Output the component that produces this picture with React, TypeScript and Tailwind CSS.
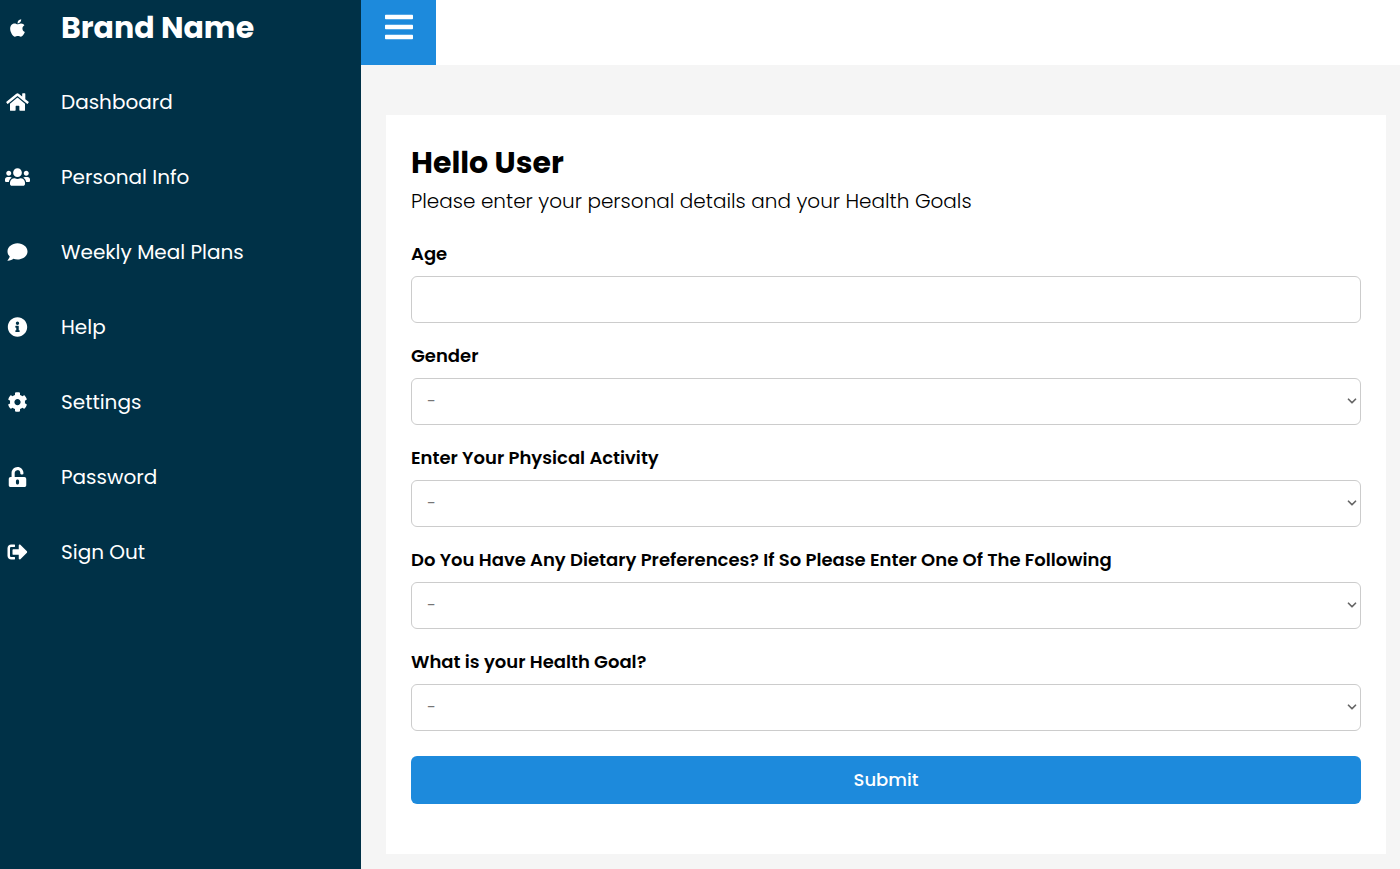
import { useId } from "react";
import type { IconType } from "react-icons";
import {
  FaApple,
  FaBars,
  FaCog,
  FaComment,
  FaHome,
  FaInfoCircle,
  FaSignOutAlt,
  FaUnlockAlt,
  FaUsers,
} from "react-icons/fa";
import { FiChevronDown } from "react-icons/fi";

const links: { label: string; icon: IconType }[] = [
  { label: "Dashboard", icon: FaHome },
  { label: "Personal Info", icon: FaUsers },
  { label: "Weekly Meal Plans", icon: FaComment },
  { label: "Help", icon: FaInfoCircle },
  { label: "Settings", icon: FaCog },
  { label: "Password", icon: FaUnlockAlt },
  { label: "Sign Out", icon: FaSignOutAlt },
];

const questions = [
  "Gender",
  "Enter Your Physical Activity",
  "Do You Have Any Dietary Preferences? If So Please Enter One Of The Following",
  "What is your Health Goal?",
];

const labelStyle = "block text-lg leading-6 font-semibold";
const fieldStyle =
  "block h-[47px] w-full rounded-md border border-[#cccccc] bg-white px-[15px] text-base outline-none focus:border-[#1d8adc]";

function Sidebar() {
  return (
    <nav className="w-[361px] shrink-0 bg-[#003147] text-white">
      <a href="#home" className="flex h-[55px] items-center">
        <span className="flex w-[61px] justify-center pr-[26px]">
          <FaApple className="h-5 w-[25px] shrink-0" />
        </span>
        <span className="text-[30px] leading-9 font-bold">Brand Name</span>
      </a>
      <ul className="pt-[9px]">
        {links.map(({ label, icon: Icon }) => (
          <li key={label}>
            <a href="#" className="flex h-[75px] items-center hover:bg-[#1d8adc]">
              <span className="flex w-[61px] justify-center pr-[26px]">
                <Icon className="h-5 w-[25px] shrink-0" />
              </span>
              <span className="text-xl">{label}</span>
            </a>
          </li>
        ))}
      </ul>
    </nav>
  );
}

function SelectField({ label }: { label: string }) {
  const id = useId();
  return (
    <div>
      <label htmlFor={id} className={labelStyle}>
        {label}
      </label>
      <div className="relative mt-[10px]">
        <select id={id} className={`${fieldStyle} appearance-none text-[#757575]`}>
          <option>-</option>
        </select>
        <FiChevronDown className="pointer-events-none absolute top-4 right-0.5 size-[14px] stroke-3 text-[#666666]" />
      </div>
    </div>
  );
}

export default function App() {
  const ageId = useId();
  return (
    <div className="flex min-h-screen bg-[#f5f5f5] font-['Poppins','Inter',sans-serif] text-black">
      <Sidebar />
      <div className="flex min-w-0 flex-1 flex-col">
        <header className="flex h-[65px] bg-white">
          <button
            type="button"
            aria-label="Toggle menu"
            className="flex w-[75px] justify-center bg-[#1d8adc] pt-[11px] text-white"
          >
            <FaBars className="size-8" />
          </button>
        </header>
        <main className="pt-[50px] pr-[14px] pb-[15px] pl-[25px]">
          <form className="bg-white px-[25px] pt-[30px] pb-[50px]">
            <h1 className="text-[30px] leading-9 font-bold">Hello User</h1>
            <p className="mt-[6px] text-xl leading-7 font-light">
              Please enter your personal details and your Health Goals
            </p>
            <div className="mt-[27px] flex flex-col gap-[21px]">
              <div>
                <label htmlFor={ageId} className={labelStyle}>
                  Age
                </label>
                <input id={ageId} type="text" className={`${fieldStyle} mt-[10px]`} />
              </div>
              {questions.map((question) => (
                <SelectField key={question} label={question} />
              ))}
            </div>
            <button
              type="submit"
              className="mt-[25px] block h-12 w-full rounded-md bg-[#1d8adc] text-lg font-medium text-white"
            >
              Submit
            </button>
          </form>
        </main>
      </div>
    </div>
  );
}
